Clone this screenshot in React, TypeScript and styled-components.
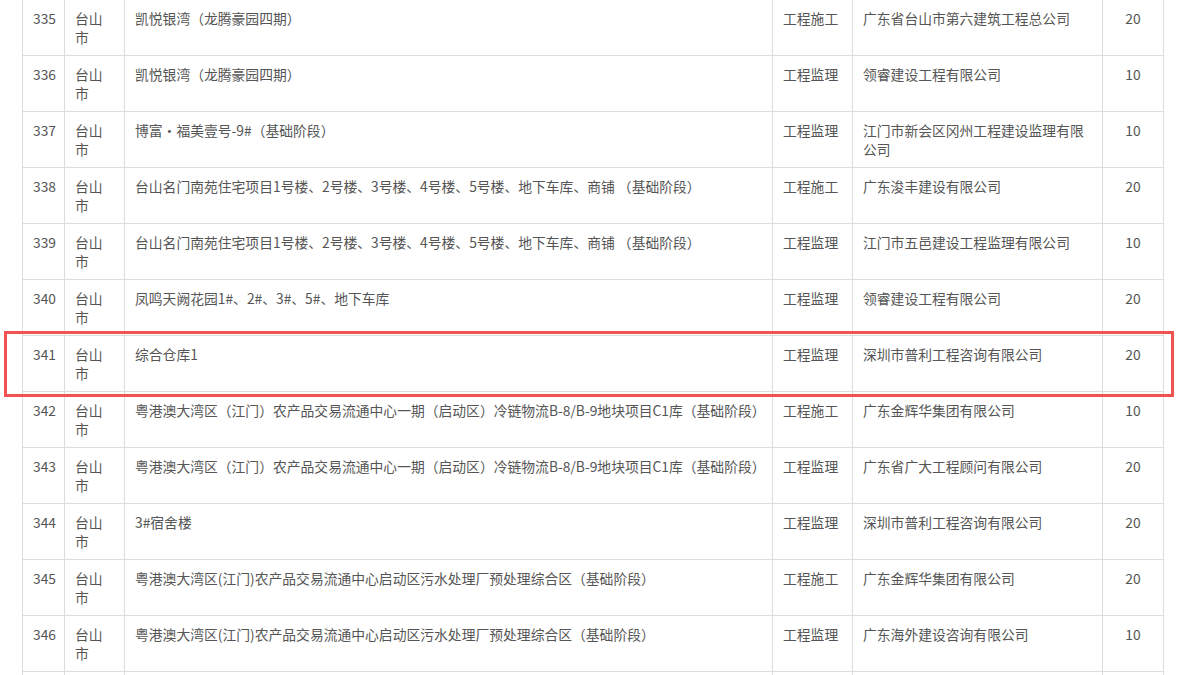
import React from 'react';
import styled, { createGlobalStyle } from 'styled-components';

const Global = createGlobalStyle`
  body {
    margin: 0;
    background: #fff;
    font-family: "Microsoft YaHei", "Noto Sans CJK SC", sans-serif;
    overflow: hidden;
  }
`;

const Wrap = styled.div`
  position: relative;
  padding-left: 22px;
  margin-top: -1px;
`;

const Table = styled.table`
  border-collapse: collapse;
  table-layout: fixed;
  width: 1141px;
  font-size: 13.8px;
  color: #555;
`;

const Col = styled.col<{ $w: number }>`
  width: ${(p) => p.$w}px;
`;

const Cell = styled.td<{ $center?: boolean }>`
  border: 1px solid #ddd;
  padding: 9px 10px 8px;
  line-height: 19px;
  vertical-align: top;
  text-align: ${(p) => (p.$center ? 'center' : 'left')};
`;

const Highlight = styled.div`
  position: absolute;
  left: 4px;
  top: 332px;
  width: 1164px;
  height: 60px;
  border: 3px solid #f25252;
  pointer-events: none;
`;

type Row = [number, string, string, string, number];

const widths = [42, 60, 648, 80, 250, 61];

const rows: Row[] = [
  [335, '凯悦银湾（龙腾豪园四期）', '工程施工', '广东省台山市第六建筑工程总公司', 20],
  [336, '凯悦银湾（龙腾豪园四期）', '工程监理', '领睿建设工程有限公司', 10],
  [337, '博富·福美壹号-9#（基础阶段）', '工程监理', '江门市新会区冈州工程建设监理有限公司', 10],
  [338, '台山名门南苑住宅项目1号楼、2号楼、3号楼、4号楼、5号楼、地下车库、商铺 （基础阶段）', '工程施工', '广东浚丰建设有限公司', 20],
  [339, '台山名门南苑住宅项目1号楼、2号楼、3号楼、4号楼、5号楼、地下车库、商铺 （基础阶段）', '工程监理', '江门市五邑建设工程监理有限公司', 10],
  [340, '凤鸣天阙花园1#、2#、3#、5#、地下车库', '工程监理', '领睿建设工程有限公司', 20],
  [341, '综合仓库1', '工程监理', '深圳市普利工程咨询有限公司', 20],
  [342, '粤港澳大湾区（江门）农产品交易流通中心一期（启动区）冷链物流B-8/B-9地块项目C1库（基础阶段）', '工程施工', '广东金辉华集团有限公司', 10],
  [343, '粤港澳大湾区（江门）农产品交易流通中心一期（启动区）冷链物流B-8/B-9地块项目C1库（基础阶段）', '工程监理', '广东省广大工程顾问有限公司', 20],
  [344, '3#宿舍楼', '工程监理', '深圳市普利工程咨询有限公司', 20],
  [345, '粤港澳大湾区(江门)农产品交易流通中心启动区污水处理厂预处理综合区（基础阶段）', '工程施工', '广东金辉华集团有限公司', 20],
  [346, '粤港澳大湾区(江门)农产品交易流通中心启动区污水处理厂预处理综合区（基础阶段）', '工程监理', '广东海外建设咨询有限公司', 10],
  [347, '台山市台城园田社区环北大道老旧小区改造工程', '工程施工', '广东聚源建设集团有限公司', 20],
  [348, '粤港澳大湾区（江门）农产品交易流通中心启动区市政基础建设规划一路、二路、纬四路、经四路部分路段', '工程施工', '广东耀南建设集团有限公司', 20],
  [349, '东方名城C区3、5、7、9、11、13、15栋（基础阶段）', '工程施工', '广东省台山市第六建筑工程总公司', 20],
  [350, '华浩花园二期9#楼、10#楼', '工程施工', '广东省电白建筑集团有限公司', 10],
];

export default function App() {
  return (
    <Wrap>
      <Global />
      <Table>
        <colgroup>
          {widths.map((w, i) => (
            <Col key={i} $w={w} />
          ))}
        </colgroup>
        <tbody>
          {rows.map(([n, project, type, company, score]) => (
            <tr key={n}>
              <Cell $center>{n}</Cell>
              <Cell>台山市</Cell>
              <Cell>{project}</Cell>
              <Cell>{type}</Cell>
              <Cell>{company}</Cell>
              <Cell $center>{score}</Cell>
            </tr>
          ))}
        </tbody>
      </Table>
      <Highlight />
    </Wrap>
  );
}
